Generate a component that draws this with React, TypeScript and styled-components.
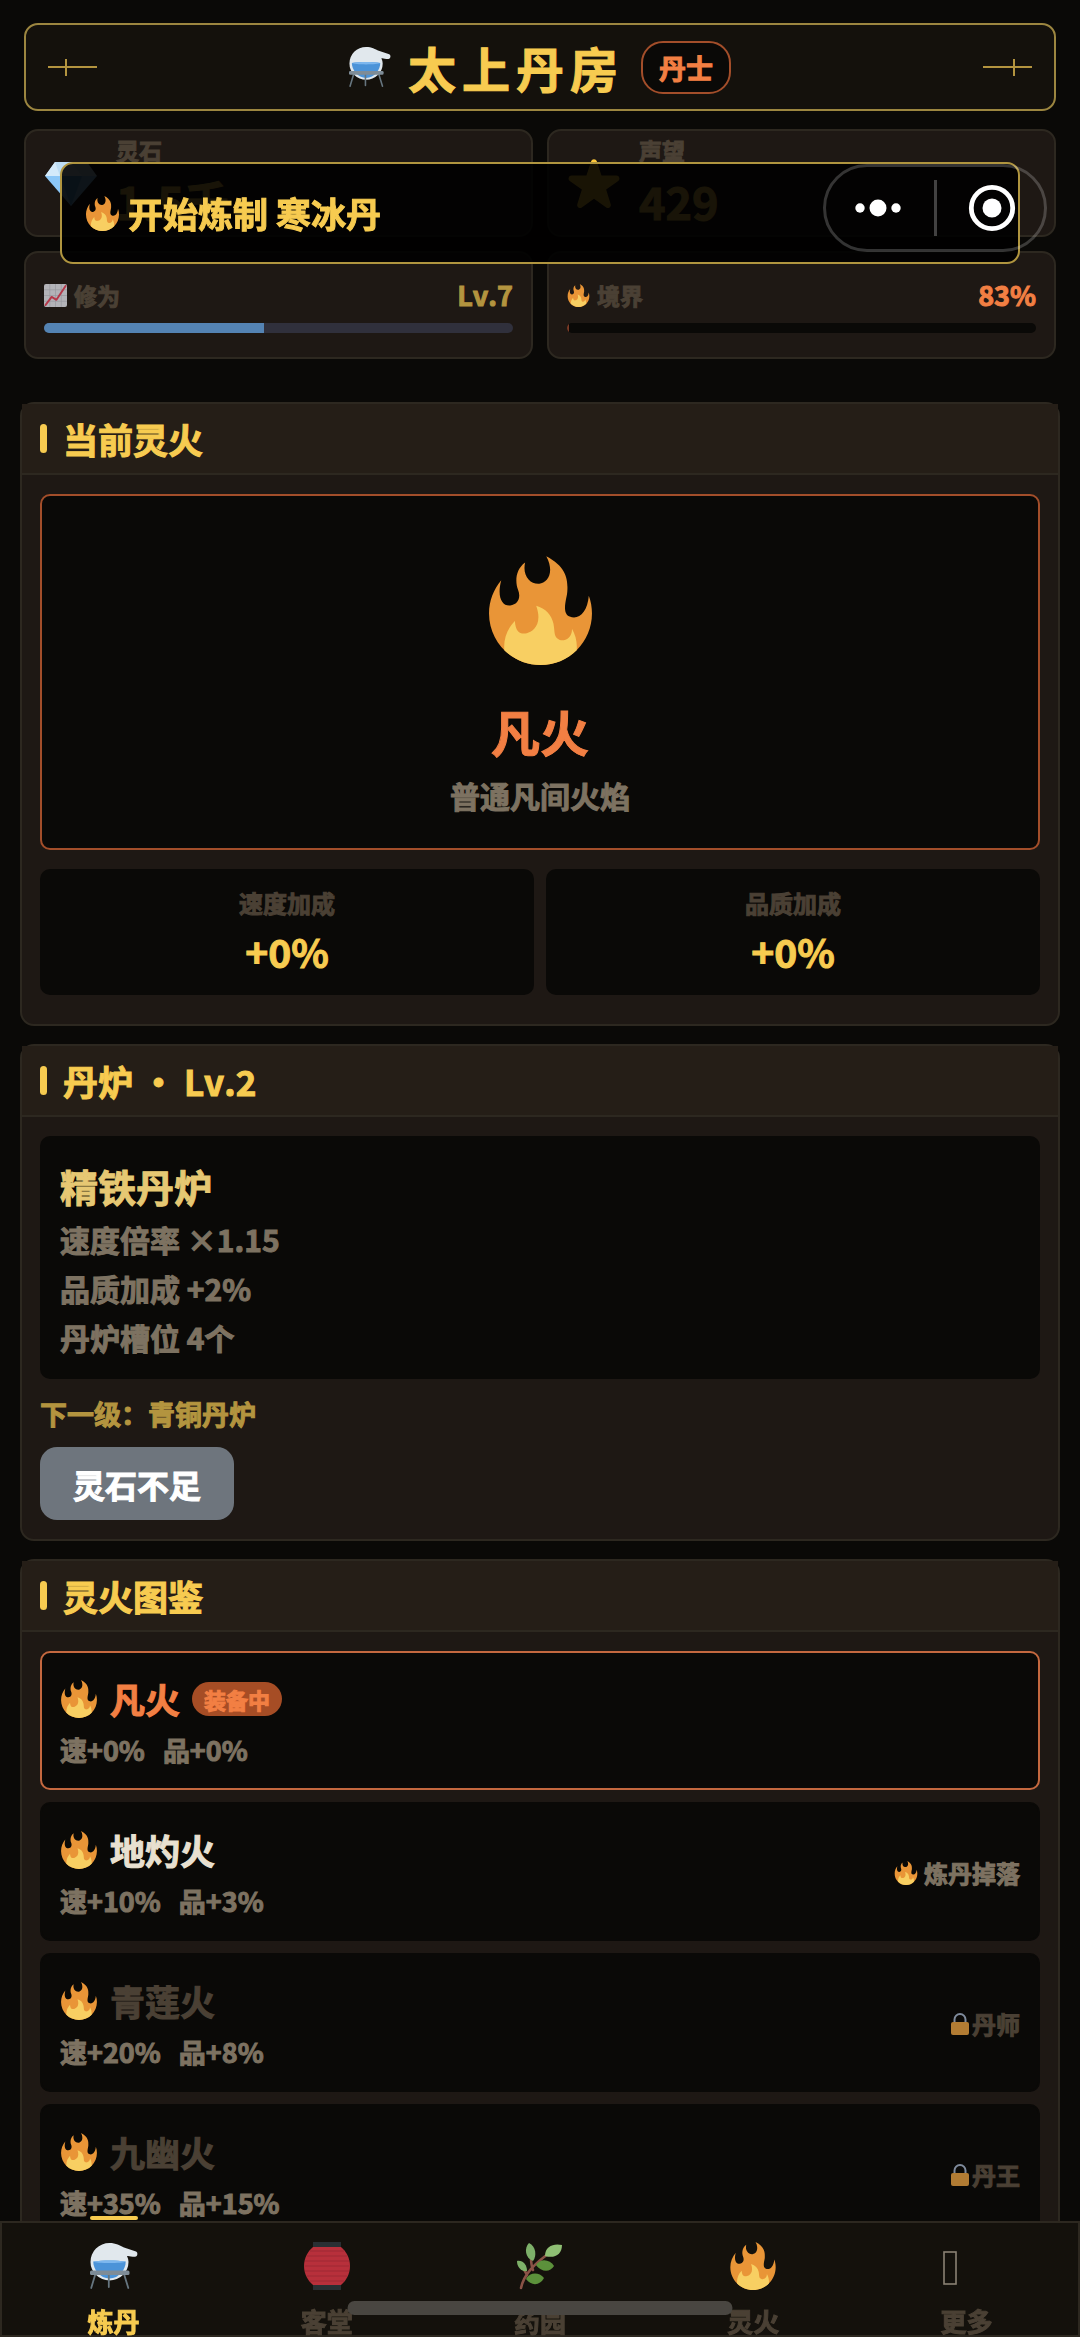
import React from 'react';
import styled, { createGlobalStyle, css } from 'styled-components';

const color = {
  page: '#0a0907',
  inset: '#0a0907',
  bar: '#14110c',
  card: '#1e1814',
  head: '#251e17',
  line: '#2d2820',
  gold: '#f7cb50',
  goldSoft: '#e6c873',
  goldDim: '#b3943f',
  goldLine: '#9c8640',
  ember: '#f27f43',
  emberLine: '#a34e2a',
  emberFill: '#a64d25',
  text: '#e8e0d0',
  muted: '#7d7261',
  faint: '#4a4034',
};

const GlobalStyle = createGlobalStyle`
  * { box-sizing: border-box; }
  body {
    margin: 0;
    background: ${color.page};
    color: ${color.text};
    font-family: "Noto Sans CJK SC", "Noto Sans", sans-serif;
    font-weight: 700;
    font-kerning: none;
    -webkit-text-stroke: 1px currentColor;
  }
  h1, h2, h3, p, dl, dt, dd, ul { margin: 0; padding: 0; font-weight: inherit; }
  ul { list-style: none; }
  button { font: inherit; font-kerning: none; border: 0; margin: 0; padding: 0; background: none; cursor: pointer; }
  svg { display: block; flex: none; }
`;

/* ---------- icons ---------- */

type IconProps = { size: number };

const Fire = ({ size }: IconProps) => (
  <svg width={size} height={size} viewBox="0 0 36 36" aria-hidden="true">
    <path fill="#e99537" d="M35 19c0-2.062-.367-4.039-1.04-5.868-.46 5.389-3.333 8.157-6.335 6.868-2.812-1.208-.917-5.917-.777-8.164.236-3.809-.012-8.169-6.931-11.794 2.875 5.5.333 8.917-2.333 9.125-2.958.231-5.667-2.542-4.667-7.042-3.238 2.386-3.332 6.402-2.333 9 1.042 2.708-.042 4.958-2.583 5.208-2.84.28-4.418-3.041-2.963-8.333C2.52 10.965 1 14.805 1 19c0 9.389 7.611 17 17 17s17-7.611 17-17z" />
    <path fill="#f8cf62" d="M28.394 23.999c.148 3.084-2.561 4.293-4.019 3.709-2.106-.843-1.541-2.291-2.083-5.291s-2.625-5.083-5.708-6c2.25 6.333-1.247 8.667-3.08 9.084-1.872.426-3.753-.001-3.968-4.007C7.352 23.668 6 26.676 6 30c0 .368.023.73.055 1.09C9.125 34.124 13.342 36 18 36s8.875-1.876 11.945-4.91c.032-.36.055-.722.055-1.09 0-2.187-.584-4.236-1.606-6.001z" />
  </svg>
);

const Alembic = ({ size }: IconProps) => (
  <svg width={size} height={size} viewBox="0 0 48 48" aria-hidden="true">
    <g transform="translate(0 1)">
      <path fill="#e1e8ed" d="M19.5 0C26 0 30 2.500 34 4.500L46 8.500C48 9.300 48 13.500 45 13.800C42 14 39 12.500 37 13C38 15 38.500 17 38.500 19A19 18.500 0 1 1 .5 19A19 18.700 0 0 1 19.500 0Z" />
      <path fill="#4b93d8" d="M3.300 18.500C12 17 27 17 35.700 18.500C36 26 29 35.500 19.500 35.500C10 35.500 3 26 3.300 18.500Z" />
      <path fill="#7db7ee" d="M3.300 18.500C12 17 27 17 35.700 18.500C33 20.500 6 20.500 3.300 18.500Z" />
      <path fill="none" stroke="#66757f" strokeWidth="1.800" strokeLinecap="round" d="M5.400 31L1.200 45M18.800 31V44M34 31L38.300 45" />
      <rect x="0" y="27.500" width="39.500" height="4.400" rx="1.500" fill="#7e8c97" />
    </g>
  </svg>
);

const Gem = ({ size }: IconProps) => (
  <svg width={size} height={size} viewBox="0 0 54 54" aria-hidden="true">
    <path fill="#8cc7f7" d="M1 20L27 50L53 20Z" />
    <path fill="#bdddf4" d="M11 6H43L53 20H1Z" />
    <path fill="#d4eafa" d="M11 6L16 20H1ZM27 6L38 20H16Z" />
    <path fill="#5dadec" d="M16 20H38L27 50Z" />
  </svg>
);

const Star = ({ size }: IconProps) => (
  <svg width={size} height={size} viewBox="0 0 36 36" aria-hidden="true">
    <path fill="#ffc93a" d="M27.287 34.627c-.404 0-.806-.124-1.152-.371L18 28.422l-8.135 5.834c-.343.247-.743.371-1.144.371-.402 0-.805-.122-1.149-.369-.683-.493-.970-1.369-.711-2.171l3.034-9.792-8.062-5.681c-.685-.500-.970-1.380-.708-2.184.264-.808 1.016-1.353 1.866-1.359l9.947-.013 3.179-9.549c.268-.809 1.023-1.353 1.874-1.353s1.606.545 1.875 1.353l3.133 9.549 10.004.013c.853.005 1.604.551 1.865 1.359.264.804-.022 1.684-.707 2.184l-8.062 5.681 3.034 9.792c.260.802-.028 1.678-.711 2.171-.345.247-.744.369-1.145.369z" />
  </svg>
);

const Chart = ({ size }: IconProps) => (
  <svg width={size} height={size} viewBox="0 0 24 24" aria-hidden="true">
    <rect width="24" height="24" rx="2" fill="#b3b3b8" />
    <path stroke="#96969e" strokeWidth=".7" d="M0 6H24M0 12H24M0 18H24M6 0V24M12 0V24M18 0V24" />
    <path fill="none" stroke="#b5384a" strokeWidth="2" strokeLinejoin="round" strokeLinecap="round" d="M1.500 22L8 13.500L13 16.500L22.500 2" />
  </svg>
);

const Lock = () => (
  <svg width="18" height="24" viewBox="0 0 18 24" aria-hidden="true">
    <path fill="none" stroke="#7f8b9c" strokeWidth="2" d="M3.500 12V7.500a5.500 5.500 0 0 1 11 0V12" />
    <rect y="10" width="18" height="13" rx="2" fill="#b27c33" />
  </svg>
);

const Lantern = ({ size }: IconProps) => (
  <svg width={size} height={size} viewBox="0 0 48 48" aria-hidden="true">
    <rect x="10" y="0" width="28" height="7" fill="#292f33" />
    <rect x="10" y="41" width="28" height="7" fill="#292f33" />
    <path fill="#b8303b" d="M10 5H38C43 9 47 16 47 24S43 39 38 43H10C5 39 1 32 1 24S5 9 10 5Z" />
    <path stroke="#9e2834" strokeWidth="1.200" d="M7 9H41M4 14H44M2 19H46M1.500 24H46.500M2 29H46M4 34H44M7 39H41" />
  </svg>
);

const Herb = ({ size }: IconProps) => (
  <svg width={size} height={size} viewBox="0 0 48 48" aria-hidden="true">
    <path fill="none" stroke="#8a5246" strokeWidth="2.600" strokeLinecap="round" d="M5 46C8 32 18 22 36 9M17 28C15 23 15 19 15 15M11 33C9 29 8 27 6 25M12 36C17 37 19 38 22 38M22 23C27 25 31 25 36 24" />
    <path fill="#7db069" d="M13 1C20 4 21 14 17 19C9 16 8 6 13 1Z" />
    <path fill="#7db069" d="M1 19C7 18 11 23 11 29C5 30 1 25 1 19Z" />
    <path fill="#5c913b" d="M10 37C14 30 23 30 28 36C24 44 15 44 10 37Z" />
    <path fill="#8fbf74" d="M29 14C29 4 38 1 46 3C46 12 39 17 29 14Z" />
    <path fill="#5c913b" d="M20 23C24 16 34 17 38 24C34 31 25 30 20 23Z" />
  </svg>
);

const MissingGlyph = ({ size }: IconProps) => (
  <svg width={size} height={size} viewBox="0 0 48 48" aria-hidden="true">
    <rect x="2" y="10" width="12" height="32" fill="none" stroke="#8a8173" strokeWidth="1.600" />
  </svg>
);

/* ---------- page ---------- */

const Page = styled.div`
  padding: 23px 20px 72px;
`;

const Banner = styled.header`
  display: flex;
  align-items: center;
  justify-content: space-between;
  height: 88px;
  margin: 0 4px;
  padding: 0 22px;
  border: 2px solid ${color.goldLine};
  border-radius: 14px;
  background: ${color.bar};
`;

const Ornament = styled.span<{ $flip?: boolean }>`
  display: flex;
  align-items: center;
  width: 49px;
  height: 17px;
  padding: 0 17px;
  justify-content: ${(p) => (p.$flip ? 'flex-end' : 'flex-start')};
  background: linear-gradient(${color.goldDim}, ${color.goldDim}) center / 100% 2px no-repeat;
  &::before {
    content: '';
    width: 2px;
    height: 17px;
    background: ${color.goldDim};
  }
`;

const Brand = styled.div`
  display: flex;
  align-items: center;
  gap: 17px;
`;

const Title = styled.h1`
  font-size: 48px;
  line-height: 64px;
  letter-spacing: 6px;
  color: ${color.gold};
`;

const Rank = styled.span`
  padding: 0 16px;
  border: 2px solid ${color.emberLine};
  border-radius: 22px;
  background: ${color.inset};
  color: ${color.ember};
  font-size: 27px;
  line-height: 49px;
`;

const Stats = styled.div`
  display: grid;
  grid-template-columns: 1fr 1fr;
  gap: 14px;
  margin: 18px 4px 43px;
`;

const statBox = css`
  height: 108px;
  border: 2px solid ${color.line};
  border-radius: 14px;
  background: ${color.card};
`;

const Resource = styled.div`
  ${statBox}
  display: flex;
  align-items: center;
  gap: 18px;
  padding: 0 18px;
`;

const ResourceLabel = styled.p`
  font-size: 23px;
  line-height: 36px;
  color: ${color.faint};
`;

const ResourceValue = styled.p`
  font-size: 45px;
  line-height: 66px;
  color: ${color.gold};
`;

const Meter = styled.div`
  ${statBox}
  padding: 24px 18px;
`;

const MeterHead = styled.div`
  display: flex;
  align-items: center;
  gap: 7px;
  margin-bottom: 10px;
  font-size: 23px;
  line-height: 36px;
  color: ${color.faint};
`;

const MeterValue = styled.span<{ $tone: string }>`
  margin-left: auto;
  font-size: 27px;
  color: ${(p) => p.$tone};
`;

const Track = styled.div<{ $bg: string }>`
  height: 10px;
  border-radius: 5px;
  overflow: hidden;
  background: ${(p) => p.$bg};
`;

const Fill = styled.div<{ $bg: string }>`
  height: 100%;
  background: ${(p) => p.$bg};
`;

const Panels = styled.main`
  display: grid;
  gap: 18px;
`;

const Panel = styled.section`
  border: 2px solid ${color.line};
  border-radius: 14px;
  background: ${color.card};
`;

const PanelHead = styled.h2`
  display: flex;
  align-items: center;
  gap: 16px;
  height: 71px;
  padding: 0 18px;
  border-bottom: 2px solid ${color.line};
  background: ${color.head};
  color: ${color.gold};
  font-size: 35px;
  line-height: 48px;
  &::before {
    content: '';
    width: 7px;
    height: 29px;
    border-radius: 4px;
    background: ${color.gold};
  }
`;

const PanelBody = styled.div`
  padding: 19px 18px;
`;

const CurrentFire = styled.div`
  display: flex;
  flex-direction: column;
  align-items: center;
  padding: 60px 0 31px;
  border: 2px solid ${color.emberLine};
  border-radius: 10px;
  background: ${color.inset};
`;

const FireTitle = styled.h3`
  margin-top: 30px;
  font-size: 49px;
  line-height: 72px;
  color: ${color.ember};
`;

const FireNote = styled.p`
  margin-top: 6px;
  font-size: 30px;
  line-height: 44px;
  color: ${color.muted};
`;

const Bonuses = styled.dl`
  display: grid;
  grid-template-columns: 1fr 1fr;
  gap: 12px;
  margin: 19px 0 10px;
`;

const Bonus = styled.div`
  padding: 18px 0 12px;
  border-radius: 10px;
  background: ${color.inset};
  text-align: center;
  dt {
    font-size: 24px;
    line-height: 32px;
    color: ${color.faint};
  }
  dd {
    font-size: 39px;
    line-height: 64px;
    color: ${color.gold};
  }
`;

const Furnace = styled.div`
  padding: 20px 20px 17px;
  border-radius: 10px;
  background: ${color.inset};
`;

const FurnaceName = styled.h3`
  font-size: 38px;
  line-height: 59px;
  color: ${color.goldSoft};
`;

const FurnaceStat = styled.p`
  font-size: 30px;
  line-height: 49px;
  color: ${color.muted};
`;

const NextLevel = styled.p`
  padding: 13px 0 11px;
  font-size: 27px;
  line-height: 44px;
  color: ${color.goldDim};
`;

const Upgrade = styled.button`
  display: block;
  height: 73px;
  padding: 0 33px;
  border-radius: 17px;
  background: #6e757d;
  color: #fff;
  font-size: 32px;
`;

const FireList = styled.ul`
  display: grid;
  gap: 12px;
`;

const FireRow = styled.li<{ $active?: boolean }>`
  display: flex;
  align-items: center;
  justify-content: space-between;
  padding: 18px 18px 15px;
  border: 2px solid ${(p) => (p.$active ? '#c4683f' : color.inset)};
  border-radius: 10px;
  background: ${color.inset};
`;

const FireName = styled.h3<{ $tone: string }>`
  display: flex;
  align-items: center;
  gap: 12px;
  font-size: 35px;
  line-height: 56px;
  color: ${(p) => p.$tone};
`;

const Equipped = styled.span`
  padding: 0 12px;
  border-radius: 17px;
  background: ${color.emberFill};
  color: ${color.ember};
  font-size: 22px;
  line-height: 34px;
`;

const FireStats = styled.p`
  display: flex;
  gap: 18px;
  font-size: 27px;
  line-height: 46px;
  color: ${color.muted};
`;

const Source = styled.span<{ $locked?: boolean }>`
  display: flex;
  align-items: center;
  gap: ${(p) => (p.$locked ? 3 : 6)}px;
  font-size: 24px;
  line-height: 36px;
  color: ${(p) => (p.$locked ? color.faint : color.muted)};
`;

/* ---------- overlays ---------- */

const Toast = styled.div`
  position: fixed;
  top: 162px;
  left: 60px;
  right: 60px;
  display: flex;
  align-items: center;
  gap: 8px;
  height: 102px;
  padding: 0 23px;
  border: 2px solid #b0953f;
  border-radius: 13px;
  background: rgba(0, 0, 0, 0.9);
  color: ${color.gold};
  font-size: 35px;
  line-height: 50px;
`;

const Capsule = styled.div`
  position: fixed;
  top: 164px;
  right: 33px;
  display: flex;
  align-items: center;
  width: 224px;
  height: 88px;
  border: 3px solid rgba(255, 255, 255, 0.2);
  border-radius: 44px;
`;

const CapsuleButton = styled.button`
  display: flex;
  flex: 1;
  align-items: center;
  justify-content: center;
  height: 56px;
  padding-right: 4px;
  & + & {
    padding: 0 0 0 4px;
    border-left: 3px solid rgba(255, 255, 255, 0.25);
  }
`;

const TabBar = styled.nav`
  position: fixed;
  left: 0;
  right: 0;
  bottom: 0;
  display: grid;
  grid-template-columns: repeat(5, 1fr);
  height: 116px;
  padding: 0 5px;
  border: 2px solid ${color.line};
  background: ${color.bar};
`;

const Tab = styled.button<{ $active?: boolean }>`
  position: relative;
  display: flex;
  flex-direction: column;
  align-items: center;
  padding-top: 19px;
  gap: 13px;
  color: ${(p) => (p.$active ? color.gold : color.faint)};
  font-size: 26px;
  line-height: 36px;
  &::before {
    content: '';
    display: ${(p) => (p.$active ? 'block' : 'none')};
    position: absolute;
    top: -7px;
    width: 48px;
    height: 4px;
    border-radius: 2px;
    background: ${color.gold};
  }
`;

const HomeIndicator = styled.div`
  position: fixed;
  left: 50%;
  bottom: 22px;
  width: 385px;
  height: 14px;
  transform: translateX(-50%);
  border-radius: 7px;
  background: #494641;
`;

/* ---------- data ---------- */

const fires = [
  { name: '凡火', speed: '速+0%', quality: '品+0%', tone: color.ember, equipped: true },
  { name: '地灼火', speed: '速+10%', quality: '品+3%', tone: color.text, drop: '炼丹掉落' },
  { name: '青莲火', speed: '速+20%', quality: '品+8%', tone: color.faint, lock: '丹师' },
  { name: '九幽火', speed: '速+35%', quality: '品+15%', tone: color.faint, lock: '丹王' },
];

const tabs = [
  { label: '炼丹', Icon: Alembic },
  { label: '客堂', Icon: Lantern },
  { label: '药园', Icon: Herb },
  { label: '灵火', Icon: Fire },
  { label: '更多', Icon: MissingGlyph },
];

const Progress = ({ value, label, bg, fill }: { value: number; label: string; bg: string; fill: string }) => (
  <Track $bg={bg} role="progressbar" aria-label={label} aria-valuenow={value} aria-valuemin={0} aria-valuemax={100}>
    <Fill $bg={fill} style={{ width: `${value}%` }} />
  </Track>
);

export default function App() {
  return (
    <>
      <GlobalStyle />
      <Page>
        <Banner>
          <Ornament />
          <Brand>
            <Alembic size={42} />
            <Title>太上丹房</Title>
            <Rank>丹士</Rank>
          </Brand>
          <Ornament $flip />
        </Banner>

        <Stats>
          <Resource>
            <Gem size={54} />
            <div>
              <ResourceLabel>灵石</ResourceLabel>
              <ResourceValue>1.5千</ResourceValue>
            </div>
          </Resource>
          <Resource>
            <Star size={54} />
            <div>
              <ResourceLabel>声望</ResourceLabel>
              <ResourceValue>429</ResourceValue>
            </div>
          </Resource>
          <Meter>
            <MeterHead>
              <Chart size={23} />
              修为
              <MeterValue $tone={color.goldDim}>Lv.7</MeterValue>
            </MeterHead>
            <Progress value={47} label="修为" bg="#30303c" fill="#5483b3" />
          </Meter>
          <Meter>
            <MeterHead>
              <Fire size={23} />
              境界
              <MeterValue $tone={color.ember}>83%</MeterValue>
            </MeterHead>
            <Progress value={0.5} label="境界" bg={color.inset} fill="#7a3a26" />
          </Meter>
        </Stats>

        <Panels>
          <Panel>
            <PanelHead>当前灵火</PanelHead>
            <PanelBody>
              <CurrentFire>
                <Fire size={109} />
                <FireTitle>凡火</FireTitle>
                <FireNote>普通凡间火焰</FireNote>
              </CurrentFire>
              <Bonuses>
                <Bonus>
                  <dt>速度加成</dt>
                  <dd>+0%</dd>
                </Bonus>
                <Bonus>
                  <dt>品质加成</dt>
                  <dd>+0%</dd>
                </Bonus>
              </Bonuses>
            </PanelBody>
          </Panel>

          <Panel>
            <PanelHead>丹炉 • Lv.2</PanelHead>
            <PanelBody>
              <Furnace>
                <FurnaceName>精铁丹炉</FurnaceName>
                <FurnaceStat>速度倍率 ×1.15</FurnaceStat>
                <FurnaceStat>品质加成 +2%</FurnaceStat>
                <FurnaceStat>丹炉槽位 4个</FurnaceStat>
              </Furnace>
              <NextLevel>下一级：青铜丹炉</NextLevel>
              <Upgrade type="button">灵石不足</Upgrade>
            </PanelBody>
          </Panel>

          <Panel>
            <PanelHead>灵火图鉴</PanelHead>
            <PanelBody>
              <FireList>
                {fires.map((f) => (
                  <FireRow key={f.name} $active={f.equipped}>
                    <div>
                      <FireName $tone={f.tone}>
                        <Fire size={38} />
                        {f.name}
                        {f.equipped && <Equipped>装备中</Equipped>}
                      </FireName>
                      <FireStats>
                        <span>{f.speed}</span>
                        <span>{f.quality}</span>
                      </FireStats>
                    </div>
                    {f.drop && (
                      <Source>
                        <Fire size={24} />
                        {f.drop}
                      </Source>
                    )}
                    {f.lock && (
                      <Source $locked>
                        <Lock />
                        {f.lock}
                      </Source>
                    )}
                  </FireRow>
                ))}
              </FireList>
            </PanelBody>
          </Panel>
        </Panels>
      </Page>

      <TabBar>
        {tabs.map(({ label, Icon }, i) => (
          <Tab key={label} type="button" $active={i === 0}>
            <Icon size={48} />
            {label}
          </Tab>
        ))}
      </TabBar>
      <HomeIndicator />

      <Toast role="status">
        <Fire size={35} />
        开始炼制 寒冰丹
      </Toast>
      <Capsule>
        <CapsuleButton type="button" aria-label="更多操作">
          <svg width="48" height="20" viewBox="0 0 48 20" fill="#fff">
            <circle cx="6" cy="10" r="4.700" />
            <circle cx="24" cy="10" r="8.500" />
            <circle cx="42" cy="10" r="4.700" />
          </svg>
        </CapsuleButton>
        <CapsuleButton type="button" aria-label="关闭">
          <svg width="48" height="48" viewBox="0 0 48 48">
            <circle cx="24" cy="24" r="20.700" fill="none" stroke="#fff" strokeWidth="4.800" />
            <circle cx="24" cy="24" r="9.500" fill="#fff" />
          </svg>
        </CapsuleButton>
      </Capsule>
    </>
  );
}
